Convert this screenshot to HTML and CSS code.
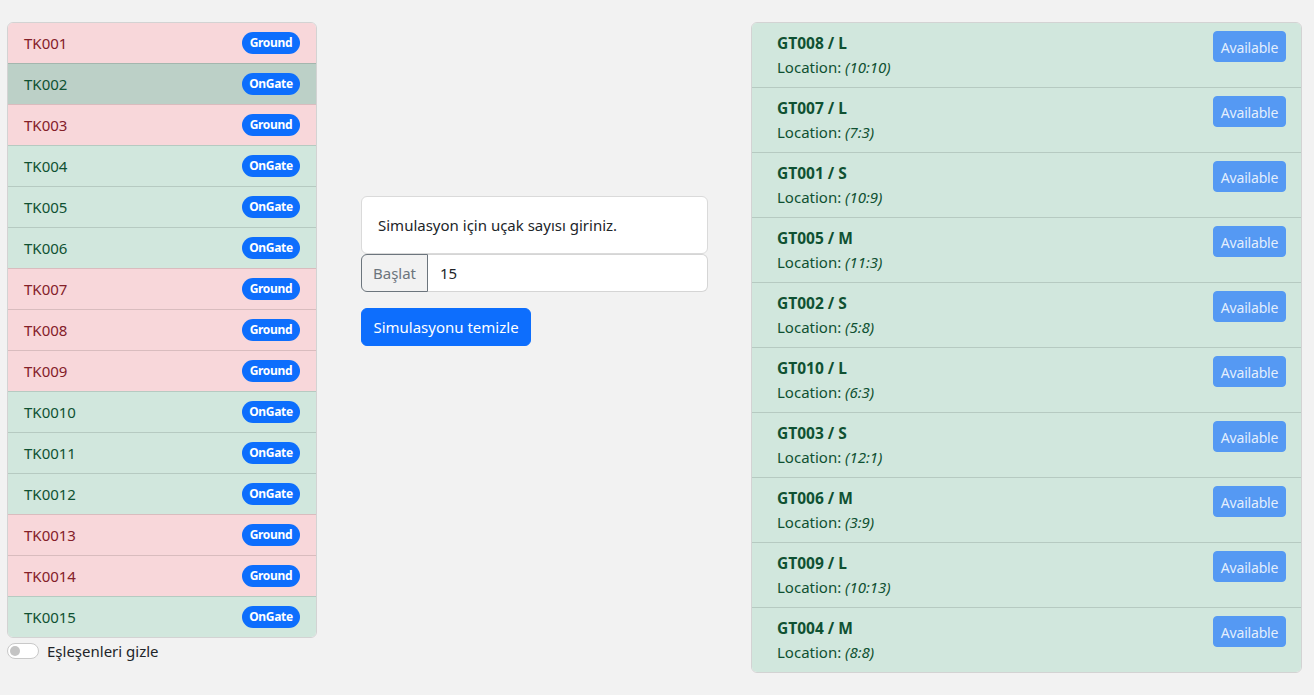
FILE: index.html
```html
<!DOCTYPE html>
<html lang="tr">
<head>
<meta charset="utf-8">
<title>Simulasyon</title>
<link rel="stylesheet" href="styles.css">
</head>
<body>
<div class="layout">
  <div class="col-left">
    <ul class="list">
      <li class="item danger"><span>TK001</span><span class="badge">Ground</span></li>
      <li class="item success hover"><span>TK002</span><span class="badge">OnGate</span></li>
      <li class="item danger"><span>TK003</span><span class="badge">Ground</span></li>
      <li class="item success"><span>TK004</span><span class="badge">OnGate</span></li>
      <li class="item success"><span>TK005</span><span class="badge">OnGate</span></li>
      <li class="item success"><span>TK006</span><span class="badge">OnGate</span></li>
      <li class="item danger"><span>TK007</span><span class="badge">Ground</span></li>
      <li class="item danger"><span>TK008</span><span class="badge">Ground</span></li>
      <li class="item danger"><span>TK009</span><span class="badge">Ground</span></li>
      <li class="item success"><span>TK0010</span><span class="badge">OnGate</span></li>
      <li class="item success"><span>TK0011</span><span class="badge">OnGate</span></li>
      <li class="item success"><span>TK0012</span><span class="badge">OnGate</span></li>
      <li class="item danger"><span>TK0013</span><span class="badge">Ground</span></li>
      <li class="item danger"><span>TK0014</span><span class="badge">Ground</span></li>
      <li class="item success"><span>TK0015</span><span class="badge">OnGate</span></li>
    </ul>
    <label class="switch-row">
      <span class="switch"><span class="knob"></span></span>
      <span>Eşleşenleri gizle</span>
    </label>
  </div>

  <div class="col-mid">
    <div class="card">Simulasyon için uçak sayısı giriniz.</div>
    <div class="input-group">
      <button class="btn-outline">Başlat</button>
      <input class="field" type="text" value="15">
    </div>
    <button class="btn-primary">Simulasyonu temizle</button>
  </div>

  <div class="col-right">
    <ul class="gates">
      <li class="gate"><div class="gate-info"><div class="gate-title">GT008 / L</div><div>Location: <em>(10:10)</em></div></div><button class="btn-avail">Available</button></li>
      <li class="gate"><div class="gate-info"><div class="gate-title">GT007 / L</div><div>Location: <em>(7:3)</em></div></div><button class="btn-avail">Available</button></li>
      <li class="gate"><div class="gate-info"><div class="gate-title">GT001 / S</div><div>Location: <em>(10:9)</em></div></div><button class="btn-avail">Available</button></li>
      <li class="gate"><div class="gate-info"><div class="gate-title">GT005 / M</div><div>Location: <em>(11:3)</em></div></div><button class="btn-avail">Available</button></li>
      <li class="gate"><div class="gate-info"><div class="gate-title">GT002 / S</div><div>Location: <em>(5:8)</em></div></div><button class="btn-avail">Available</button></li>
      <li class="gate"><div class="gate-info"><div class="gate-title">GT010 / L</div><div>Location: <em>(6:3)</em></div></div><button class="btn-avail">Available</button></li>
      <li class="gate"><div class="gate-info"><div class="gate-title">GT003 / S</div><div>Location: <em>(12:1)</em></div></div><button class="btn-avail">Available</button></li>
      <li class="gate"><div class="gate-info"><div class="gate-title">GT006 / M</div><div>Location: <em>(3:9)</em></div></div><button class="btn-avail">Available</button></li>
      <li class="gate"><div class="gate-info"><div class="gate-title">GT009 / L</div><div>Location: <em>(10:13)</em></div></div><button class="btn-avail">Available</button></li>
      <li class="gate"><div class="gate-info"><div class="gate-title">GT004 / M</div><div>Location: <em>(8:8)</em></div></div><button class="btn-avail">Available</button></li>
    </ul>
  </div>
</div>
</body>
</html>
```

FILE: styles.css
```css
* { box-sizing: border-box; }
html, body { margin: 0; padding: 0; }
body {
  background: #f2f2f2;
  font-family: "Noto Sans", "Open Sans", sans-serif;
  font-size: 16px;
  line-height: 24px;
  color: #212529;
}
.layout {
  display: flex;
  align-items: flex-start;
  padding: 22px 0 0 7px;
}
.col-left { width: 310px; flex: none; }
.col-mid { width: 347px; flex: none; margin-left: 44px; margin-top: 174px; }
.col-right { width: 551px; flex: none; margin-left: 43px; }

.list, .gates {
  list-style: none;
  margin: 0;
  padding: 0;
  border: 1px solid rgba(0,0,0,.125);
  border-radius: 6px;
  overflow: hidden;
}
.item {
  display: flex;
  justify-content: space-between;
  align-items: center;
  height: 41px;
  padding: 0 16px;
  border-top: 1px solid rgba(0,0,0,.125);
  font-size: 15px;
}
.item:first-child { border-top: 0; height: 40px; }
.danger { background: #f8d7da; color: #842029; }
.success { background: #d1e7dd; color: #0f5132; }
.success.hover { background: #bcd0c7; }
.badge {
  background: #0d6efd;
  color: #fff;
  font-weight: 700;
  font-size: 12px;
  line-height: 12px;
  padding: 5px 0;
  width: 58px;
  text-align: center;
  border-radius: 11px;
  letter-spacing: -0.3px;
}
.switch-row {
  display: flex;
  align-items: center;
  gap: 8px;
  margin-top: 1px;
  font-size: 15px;
}
.switch {
  width: 32px;
  height: 16px;
  border: 1px solid #c9c9c9;
  border-radius: 8px;
  background: #fff;
  display: flex;
  align-items: center;
  padding-left: 2px;
}
.knob {
  width: 10px;
  height: 10px;
  border-radius: 50%;
  background: #c4c4c4;
}

.card {
  background: #fff;
  border: 1px solid #dadada;
  border-radius: 6px;
  padding: 16px 16px;
  height: 58px;
  font-size: 15px;
}
.input-group {
  display: flex;
  height: 38px;
}
.btn-outline {
  font: inherit;
  font-size: 15px;
  color: #6c757d;
  background: transparent;
  border: 1px solid #6c757d;
  border-radius: 6px 0 0 6px;
  width: 67px;
  padding: 0;
}
.field {
  font: inherit;
  font-size: 15px;
  flex: 1;
  min-width: 0;
  border: 1px solid #d5d5d5;
  border-left: 0;
  border-radius: 0 6px 6px 0;
  background: #fff;
  padding: 0 12px;
  color: #212529;
}
.btn-primary {
  font: inherit;
  font-size: 15px;
  margin-top: 16px;
  height: 38px;
  width: 170px;
  background: #0d6efd;
  color: #fff;
  border: 1px solid #0d6efd;
  border-radius: 6px;
  padding: 0;
}

.gate {
  display: flex;
  justify-content: space-between;
  align-items: flex-start;
  height: 65px;
  padding: 8px 15px 8px 25px;
  background: #d1e7dd;
  color: #0f5132;
  border-top: 1px solid rgba(0,0,0,.125);
  font-size: 15px;
}
.gate:first-child { border-top: 0; height: 64px; }
.gate-title { font-weight: 700; font-size: 15.5px; }
.gate-info em { font-style: italic; }
.btn-avail {
  font: inherit;
  font-size: 14px;
  line-height: 21px;
  height: 31px;
  width: 73px;
  padding: 1px 0 0;
  border: 1px solid #5599f3;
  border-radius: 4px;
  background: #5599f3;
  color: rgba(255,255,255,.85);
  letter-spacing: -0.2px;
}
```
